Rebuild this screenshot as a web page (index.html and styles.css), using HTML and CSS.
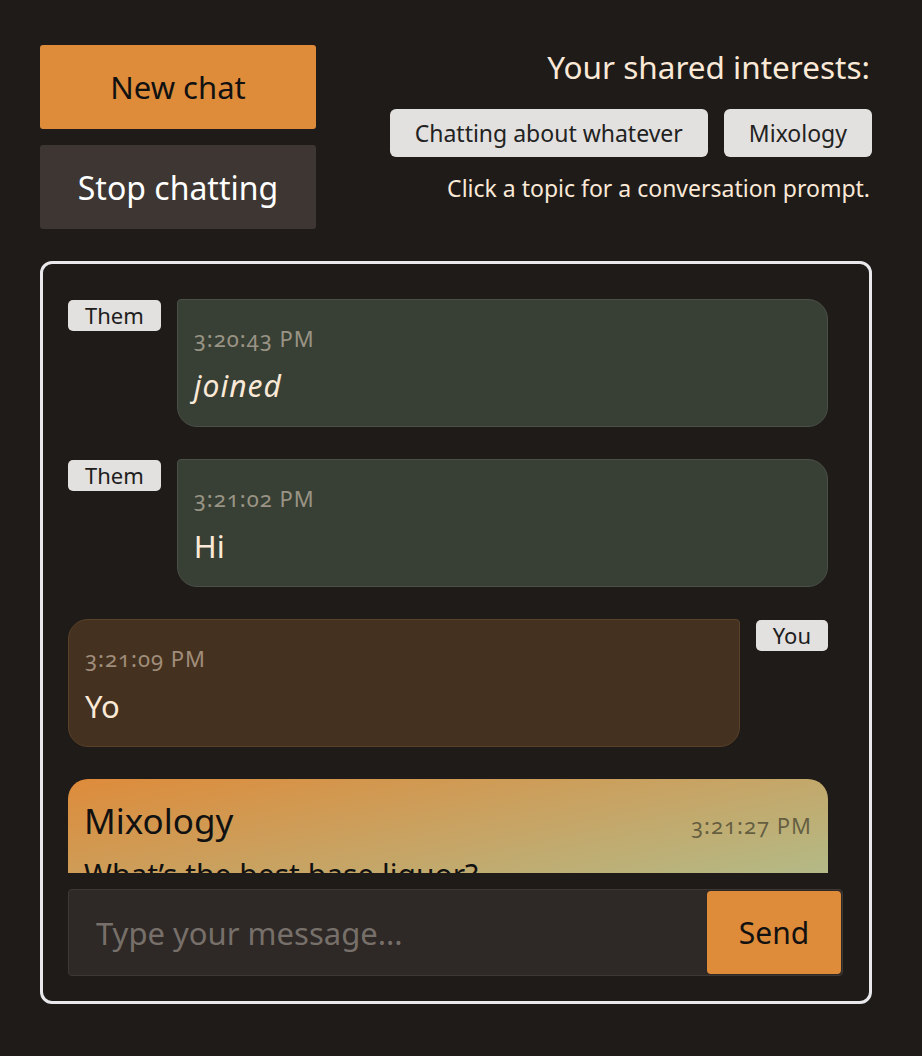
FILE: index.html
```html
<!DOCTYPE html>
<html lang="en">
<head>
<meta charset="utf-8">
<title>Chat</title>
<link rel="stylesheet" href="styles.css">
</head>
<body>
<div class="page">
  <div class="top">
    <div class="actions">
      <button class="btn btn-primary">New chat</button>
      <button class="btn btn-dark">Stop chatting</button>
    </div>
    <div class="interests">
      <div class="interests-title">Your shared interests:</div>
      <div class="chips">
        <button class="chip">Chatting about whatever</button>
        <button class="chip">Mixology</button>
      </div>
      <div class="hint">Click a topic for a conversation prompt.</div>
    </div>
  </div>

  <div class="chatbox">
    <div class="messages">
      <div class="row">
        <span class="tag">Them</span>
        <div class="bubble bubble-them">
          <div class="time">3:20:43 PM</div>
          <div class="text text-italic">joined</div>
        </div>
      </div>
      <div class="row">
        <span class="tag">Them</span>
        <div class="bubble bubble-them">
          <div class="time">3:21:02 PM</div>
          <div class="text">Hi</div>
        </div>
      </div>
      <div class="row">
        <div class="bubble bubble-you">
          <div class="time">3:21:09 PM</div>
          <div class="text">Yo</div>
        </div>
        <span class="tag">You</span>
      </div>
      <div class="row">
        <div class="prompt">
          <div class="prompt-head">
            <span class="prompt-title">Mixology</span>
            <span class="prompt-time">3:21:27 PM</span>
          </div>
          <div class="prompt-text">What’s the best base liquor?</div>
        </div>
      </div>
    </div>
    <div class="composer">
      <input class="composer-input" type="text" placeholder="Type your message...">
      <button class="composer-send">Send</button>
    </div>
  </div>
</div>
</body>
</html>
```
FILE: styles.css
```css
* { box-sizing: border-box; }

html, body {
  margin: 0;
  background: #1f1b19;
}

body {
  font-family: "Noto Sans", "DejaVu Sans", sans-serif;
  color: #fbe9d7;
}

.page {
  width: 922px;
  padding: 45px 50px 0 40px;
}

.top {
  display: flex;
  justify-content: space-between;
  align-items: flex-start;
}

.actions {
  display: flex;
  flex-direction: column;
  gap: 16px;
  width: 276px;
}

.btn {
  height: 84px;
  border: none;
  border-radius: 3px;
  font-family: inherit;
  padding: 0;
}

.btn-primary {
  background: #de8b3a;
  color: #111;
  font-size: 31px;
}

.btn-dark {
  background: #3d3632;
  color: #fff;
  font-size: 32px;
}

.interests {
  display: flex;
  flex-direction: column;
  align-items: flex-end;
  padding-top: 2px;
}

.interests-title {
  font-size: 31.5px;
  line-height: 40px;
  margin-right: 2px;
}

.chips {
  display: flex;
  gap: 16px;
  margin-top: 22px;
}

.chip {
  height: 48px;
  padding: 0 25px;
  border: none;
  border-radius: 6px;
  background: #e2e1df;
  color: #222;
  font-family: inherit;
  font-size: 23px;
}

.hint {
  margin-top: 16px;
  margin-right: 2px;
  font-size: 23px;
  line-height: 30px;
}

.chatbox {
  margin-top: 32px;
  height: 743px;
  border: 3px solid #e9e8ea;
  border-radius: 12px;
  display: flex;
  flex-direction: column;
}

.messages {
  flex: 1;
  overflow: hidden;
  padding: 35px 41px 0 25px;
  display: flex;
  flex-direction: column;
  gap: 32px;
}

.row {
  display: flex;
  align-items: flex-start;
  gap: 16px;
}

.tag {
  flex: none;
  background: #e2e1df;
  color: #1d1d1d;
  font-size: 22px;
  line-height: 31px;
  padding: 0 17px;
  border-radius: 5px;
  margin-top: 1px;
}

.bubble {
  flex: 1;
  border: 1px solid;
  padding: 22px 16px 20px;
}

.bubble-them {
  background: #383f35;
  border-color: #4a5046;
  border-radius: 4px 20px 20px 20px;
}

.bubble-you {
  background: #45311f;
  border-color: #5a4129;
  border-radius: 20px 4px 20px 20px;
}

.time {
  font-size: 22px;
  line-height: 32px;
  letter-spacing: 1px;
  color: rgba(251, 233, 215, 0.5);
  font-variant-numeric: oldstyle-nums;
}

.text {
  margin-top: 12px;
  font-size: 31px;
  line-height: 40px;
  color: #fbe9d7;
}

.text-italic {
  font-style: italic;
  font-size: 30px;
  letter-spacing: 1px;
}

.prompt {
  flex: 1;
  border-radius: 20px;
  padding: 20px 16px 24px;
  background: linear-gradient(to bottom right, #de8b3a 0%, #c6a566 45%, #a8c69a 100%);
  color: #111;
  min-height: 160px;
}

.prompt-head {
  display: flex;
  justify-content: space-between;
  align-items: baseline;
}

.prompt-title {
  font-size: 35px;
  line-height: 44px;
}

.prompt-time {
  font-size: 22px;
  letter-spacing: 1px;
  color: rgba(40, 40, 30, 0.6);
  font-variant-numeric: oldstyle-nums;
}

.prompt-text {
  margin-top: 12px;
  font-size: 30px;
  line-height: 40px;
}

.composer {
  margin: 16px 26px 25px 25px;
  height: 87px;
  display: flex;
  padding: 1px;
  border: 1px solid #3d3834;
  border-radius: 4px;
  background: #2e2926;
}

.composer-input {
  flex: 1;
  min-width: 0;
  border: none;
  background: transparent;
  outline: none;
  padding: 0 0 0 26px;
  font-family: inherit;
  font-size: 31px;
  color: #fbe9d7;
}

.composer-input::placeholder {
  color: #77706a;
}

.composer-send {
  width: 134px;
  border: none;
  border-radius: 4px;
  background: #de8b3a;
  color: #111;
  font-family: inherit;
  font-size: 30px;
  padding: 0;
}
```
